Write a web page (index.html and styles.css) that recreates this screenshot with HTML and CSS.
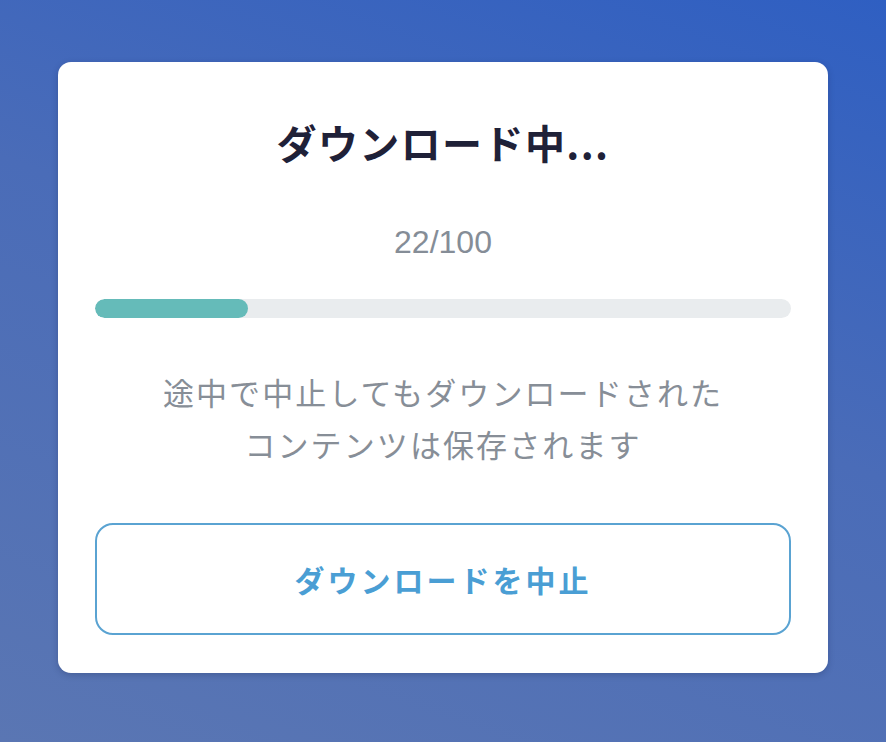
FILE: index.html
```html
<!DOCTYPE html>
<html lang="ja">
<head>
    <meta charset="UTF-8">
    <meta name="viewport" content="width=device-width, initial-scale=1.0">
    <title>ダウンロード中</title>
    <link rel="stylesheet" href="styles.css">
</head>
<body>
    <div class="dialog">
        <h1 class="dialog-title">ダウンロード中...</h1>
        <div class="progress-count">22/100</div>
        <div class="progress-track">
            <div class="progress-fill" style="width: 22%"></div>
        </div>
        <p class="dialog-note">途中で中止してもダウンロードされた<br>コンテンツは保存されます</p>
        <button class="cancel-button">ダウンロードを中止</button>
    </div>
</body>
</html>
```

FILE: styles.css
```css
html, body {
    height: 100%;
}

body {
    margin: 0;
    padding: 62px 0 0;
    box-sizing: border-box;
    background: linear-gradient(200deg, #2f5fc2 0%, #4a6cb8 45%, #5a76b3 100%);
    font-family: "Noto Sans CJK JP", "Noto Sans", sans-serif;
}

.dialog {
    width: 770px;
    margin: 0 auto;
    box-sizing: border-box;
    padding: 52px 37px 38px;
    background-color: #ffffff;
    border-radius: 13px;
    box-shadow: 0 2px 6px rgba(20, 30, 70, 0.25);
    text-align: center;
}

.dialog-title {
    margin: 0;
    font-size: 40px;
    line-height: 56px;
    font-weight: bold;
    letter-spacing: 1.4px;
    color: #1f2138;
}

.progress-count {
    margin-top: 52px;
    font-family: "Liberation Sans", Arial, sans-serif;
    font-size: 32px;
    line-height: 40px;
    color: #858d97;
}

.progress-track {
    margin-top: 37px;
    height: 19px;
    border-radius: 10px;
    background-color: #e9ecee;
    overflow: hidden;
}

.progress-fill {
    height: 100%;
    border-radius: 10px;
    background-color: #65bbb9;
}

.dialog-note {
    margin: 48px 0 0;
    font-size: 31px;
    line-height: 52px;
    letter-spacing: 2.1px;
    color: #878e97;
}

.cancel-button {
    display: block;
    width: 100%;
    height: 112px;
    margin-top: 53px;
    border: 2px solid #5aa3d2;
    border-radius: 18px;
    background-color: #ffffff;
    font-family: "Noto Sans CJK JP", "Noto Sans", sans-serif;
    font-size: 30px;
    font-weight: bold;
    letter-spacing: 3px;
    color: #4a9ed4;
}
```
